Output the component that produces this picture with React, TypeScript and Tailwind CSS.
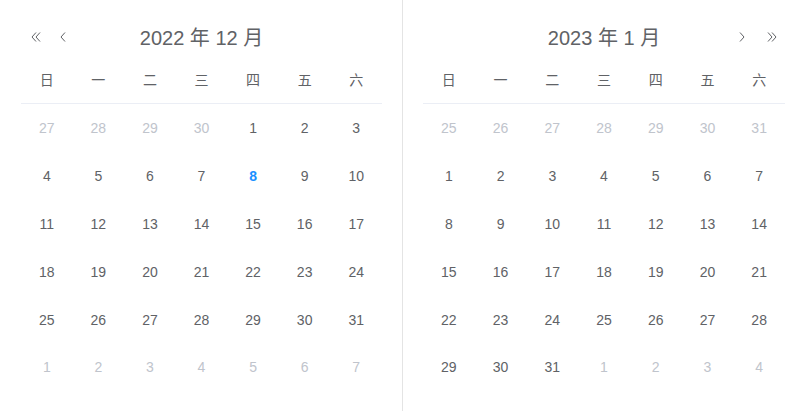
import React from "react";

type Cell = { d: number; muted?: boolean; today?: boolean };

const weekdays = ["日", "一", "二", "三", "四", "五", "六"];

function buildDec(): Cell[] {
  const cells: Cell[] = [];
  [27, 28, 29, 30].forEach((d) => cells.push({ d, muted: true }));
  for (let d = 1; d <= 31; d++) cells.push({ d, today: d === 8 });
  for (let d = 1; d <= 7; d++) cells.push({ d, muted: true });
  return cells;
}

function buildJan(): Cell[] {
  const cells: Cell[] = [];
  [25, 26, 27, 28, 29, 30, 31].forEach((d) => cells.push({ d, muted: true }));
  for (let d = 1; d <= 31; d++) cells.push({ d });
  for (let d = 1; d <= 4; d++) cells.push({ d, muted: true });
  return cells;
}

const DoubleLeft = () => (
  <svg width="12" height="12" viewBox="0 0 12 12" fill="none" stroke="#606266" strokeWidth="1">
    <path d="M6 1.5 L2 6 L6 10.5" />
    <path d="M10 1.5 L6 6 L10 10.5" />
  </svg>
);
const SingleLeft = () => (
  <svg width="8" height="12" viewBox="0 0 8 12" fill="none" stroke="#606266" strokeWidth="1">
    <path d="M6 1.5 L2 6 L6 10.5" />
  </svg>
);
const DoubleRight = () => (
  <svg width="12" height="12" viewBox="0 0 12 12" fill="none" stroke="#606266" strokeWidth="1">
    <path d="M2 1.5 L6 6 L2 10.5" />
    <path d="M6 1.5 L10 6 L6 10.5" />
  </svg>
);
const SingleRight = () => (
  <svg width="8" height="12" viewBox="0 0 8 12" fill="none" stroke="#606266" strokeWidth="1">
    <path d="M2 1.5 L6 6 L2 10.5" />
  </svg>
);

function Grid({ cells }: { cells: Cell[] }) {
  return (
    <div>
      <div className="grid grid-cols-7 h-[46px] items-center border-b border-[#ebeef5] text-[14px] text-[#606266]">
        {weekdays.map((w) => (
          <div key={w} className="text-center">
            {w}
          </div>
        ))}
      </div>
      <div className="grid grid-cols-7 auto-rows-[47.8px] text-[14px]">
        {cells.map((c, i) => (
          <div
            key={i}
            className={
              "flex items-center justify-center pt-[2px] " +
              (c.today
                ? "text-[#1890ff] font-bold"
                : c.muted
                ? "text-[#c0c4cc]"
                : "text-[#606266]")
            }
          >
            {c.d}
          </div>
        ))}
      </div>
    </div>
  );
}

export default function App() {
  return (
    <div
      className="w-[799px] h-[411px] bg-white flex overflow-hidden"
      style={{ fontFamily: '"Liberation Sans", "Noto Sans CJK SC", sans-serif' }}
    >
      <div className="w-[403px] pl-[21px] pr-[20px] pt-[18px] border-r border-[#e4e4e4]">
        <div className="relative h-[40px] flex items-center justify-center">
          <div className="absolute left-[9px] top-[13px] flex items-center">
            <DoubleLeft />
            <span className="ml-[17px]">
              <SingleLeft />
            </span>
          </div>
          <div className="text-[20px] text-[#606266]">2022 年 12 月</div>
        </div>
        <Grid cells={buildDec()} />
      </div>
      <div className="w-[396px] pl-[20px] pr-[14px] pt-[18px]">
        <div className="relative h-[40px] flex items-center justify-center">
          <div className="absolute right-[7px] top-[13px] flex items-center">
            <SingleRight />
            <span className="ml-[20px]">
              <DoubleRight />
            </span>
          </div>
          <div className="text-[20px] text-[#606266]">2023 年 1 月</div>
        </div>
        <Grid cells={buildJan()} />
      </div>
    </div>
  );
}
